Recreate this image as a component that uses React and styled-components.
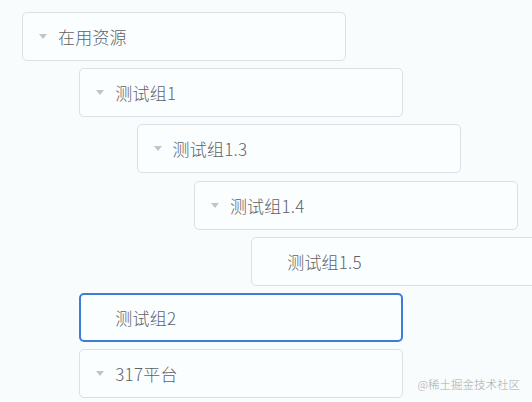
import React from 'react'
import styled, {createGlobalStyle} from 'styled-components'

const GlobalStyle = createGlobalStyle`
  html, body {
    margin: 0;
    padding: 0;
    background-color: #f8fcfd;
    overflow: hidden;
  }

  body {
    font-family: "Microsoft YaHei", "Noto Sans CJK SC", "Noto Sans", sans-serif;
  }
`;

const StyledPage = styled.div`
  position: relative;
  width: 532px;
  height: 402px;
  padding: 12px 0 0 22px;
  box-sizing: border-box;
  overflow: hidden;
`;

const StyledChildren = styled.div`
  padding-left: 57.3px;
`;

const StyledNode = styled.div`
  display: flex;
  align-items: center;
  box-sizing: border-box;
  width: 324px;
  height: 49px;
  margin-bottom: 7.2px;
  padding-left: ${props => props.selected ? '15px' : '16px'};
  background-color: #fbfeff;
  border: ${props => props.selected ? '2px solid #3d7dd8' : '1px solid #dcdfe6'};
  border-radius: 5px;
  flex-shrink: 0;
`;

const StyledCaret = styled.span`
  width: 0;
  height: 0;
  margin-right: 11px;
  border-left: 4px solid transparent;
  border-right: 4px solid transparent;
  border-top: 5px solid ${props => props.leaf ? 'transparent' : '#c0c4cc'};
`;

const StyledLabel = styled.span`
  font-size: 17px;
  font-weight: 300;
  color: #5f6266;
  letter-spacing: 0.2px;
  white-space: nowrap;
`;

const StyledMark = styled.div`
  position: absolute;
  right: 12px;
  bottom: 10px;
  font-size: 11.5px;
  font-weight: 300;
  color: #ababab;
  font-family: "Noto Sans CJK SC", sans-serif;
`;

const tree = [
  {label: '在用资源', children: [
    {label: '测试组1', children: [
      {label: '测试组1.3', children: [
        {label: '测试组1.4', children: [
          {label: '测试组1.5'}
        ]}
      ]}
    ]},
    {label: '测试组2', selected: true},
    {label: '317平台', children: []}
  ]}
];

const TreeNode = ({node}) => {
  const leaf = !node.children;
  return (
    <div>
      <StyledNode selected={node.selected}>
        <StyledCaret leaf={leaf}/>
        <StyledLabel>{node.label}</StyledLabel>
      </StyledNode>
      {node.children && node.children.length > 0 &&
        <StyledChildren>
          {node.children.map((c, i) => <TreeNode key={i} node={c}/>)}
        </StyledChildren>}
    </div>
  );
}

const App = () => {
  return (
    <StyledPage>
      <GlobalStyle/>
      {tree.map((n, i) => <TreeNode key={i} node={n}/>)}
      <StyledMark>@稀土掘金技术社区</StyledMark>
    </StyledPage>
  );
}

export default App;
